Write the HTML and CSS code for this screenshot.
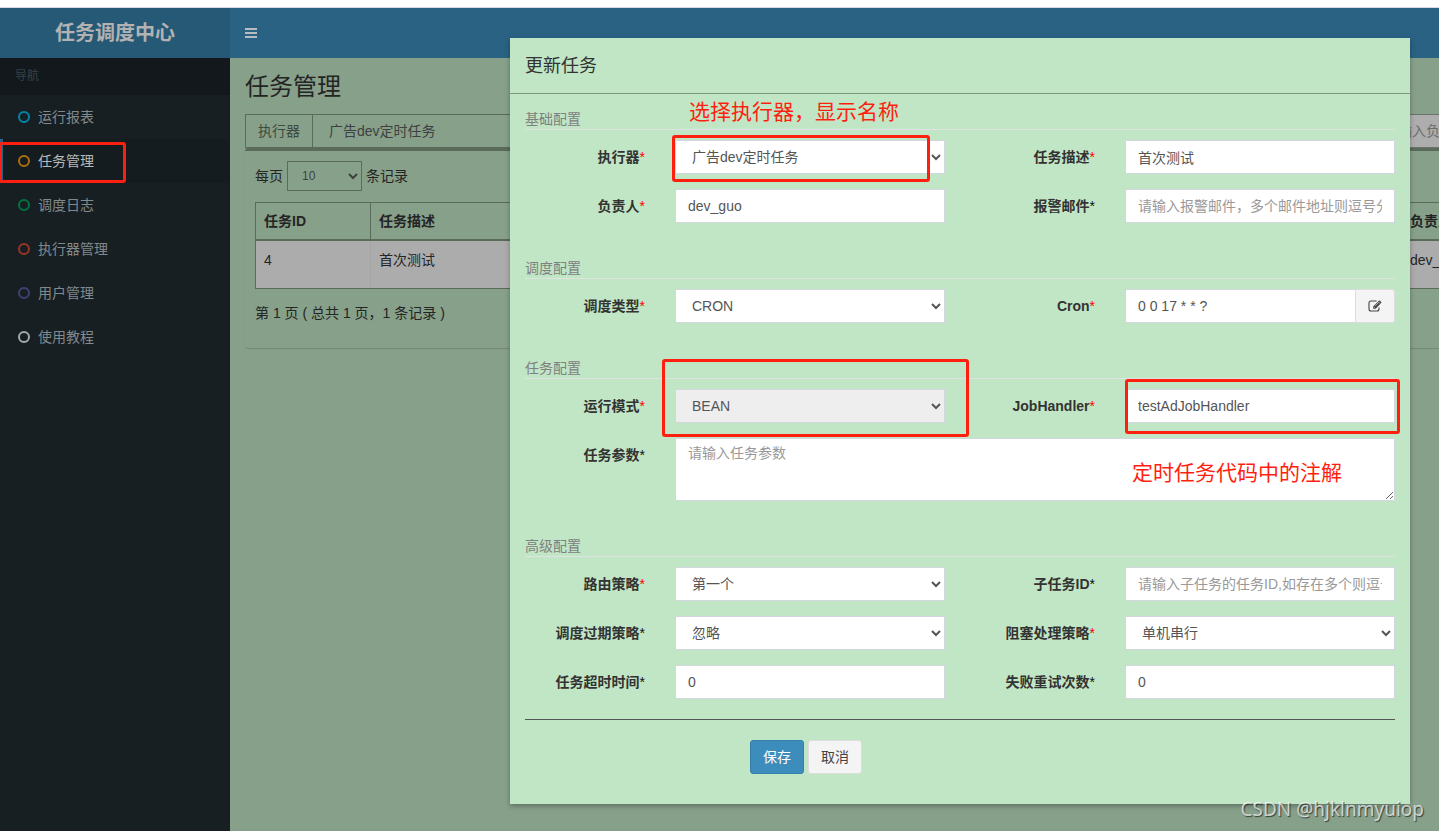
FILE: index.html
```html
<!DOCTYPE html>
<html lang="zh-CN">
<head>
<meta charset="utf-8">
<title>任务调度中心</title>
<link rel="stylesheet" href="styles.css">
</head>
<body>
<div class="page">
  <header class="topbar">
    <a class="logo" href="#">任务调度中心</a>
    <nav class="navbar">
      <button class="toggle" type="button" aria-label="菜单">
        <svg width="12" height="10" viewBox="0 0 12 10"><path d="M0 0h12v2H0zM0 4h12v2H0zM0 8h12v2H0z" fill="#b8bcbe"/></svg>
      </button>
    </nav>
  </header>
  <div class="columns">
    <aside class="sidebar">
      <div class="nav-title">导航</div>
      <a class="nav-item" href="#"><span class="ring aqua"></span>运行报表</a>
      <a class="nav-item active" href="#"><span class="ring yellow"></span>任务管理</a>
      <a class="nav-item" href="#"><span class="ring green"></span>调度日志</a>
      <a class="nav-item" href="#"><span class="ring red"></span>执行器管理</a>
      <a class="nav-item" href="#"><span class="ring purple"></span>用户管理</a>
      <a class="nav-item" href="#"><span class="ring white"></span>使用教程</a>
      <div class="mark mark-menu"></div>
    </aside>
    <main class="content">
      <h1>任务管理</h1>
      <div class="board">
        <div class="filters">
          <div class="group">
            <label class="addon" for="f-group">执行器</label>
            <select class="dim-select" id="f-group"><option>广告dev定时任务</option></select>
          </div>
          <input class="dim-input" type="text" placeholder="请输入负责人" aria-label="负责人">
        </div>
        <section class="box">
          <label class="length">每页 <select class="len-select"><option>10</option></select> 条记录</label>
          <table class="jobs">
            <colgroup><col class="col-id"><col class="col-desc"><col></colgroup>
            <thead><tr><th>任务ID</th><th>任务描述</th><th>负责人</th></tr></thead>
            <tbody><tr><td>4</td><td>首次测试</td><td>dev_guo</td></tr></tbody>
          </table>
          <div class="info">第 1 页 ( 总共 1 页，1 条记录 )</div>
        </section>
      </div>
    </main>
  </div>

  <div class="overlay">
    <div class="modal" role="dialog" aria-labelledby="modal-title">
      <h2 class="modal-head" id="modal-title">更新任务</h2>
      <form class="modal-body">
        <p class="legend">基础配置</p>
        <div class="row">
          <label for="jobGroup">执行器<span class="req">*</span></label>
          <div class="cell"><select class="control" id="jobGroup"><option>广告dev定时任务</option></select></div>
          <label for="jobDesc">任务描述<span class="req">*</span></label>
          <div class="cell"><input class="control" id="jobDesc" type="text" value="首次测试"></div>
        </div>
        <div class="row">
          <label for="author">负责人<span class="req">*</span></label>
          <div class="cell"><input class="control" id="author" type="text" value="dev_guo"></div>
          <label for="mail">报警邮件<span class="opt">*</span></label>
          <div class="cell"><input class="control" id="mail" type="text" placeholder="请输入报警邮件，多个邮件地址则逗号分隔"></div>
        </div>

        <p class="legend later">调度配置</p>
        <div class="row">
          <label for="schedule">调度类型<span class="req">*</span></label>
          <div class="cell"><select class="control" id="schedule"><option>CRON</option></select></div>
          <label for="cron">Cron<span class="req">*</span></label>
          <div class="cell cron">
            <input class="control" id="cron" type="text" value="0 0 17 * * ?">
            <button class="edit" type="button" aria-label="编辑">
              <svg width="14" height="12" viewBox="0 0 14 12" fill="none"><path d="M8.6 1H3Q1 1 1 3v6q0 2 2 2h6q2 0 2-2V7.6" stroke="#444" stroke-width="1.1"/><path d="M5.2 8.8V6.4L10.9.7q.5-.5 1 0l1.3 1.3q.5.5 0 1L7.6 8.8z" fill="#444"/><path d="M6.1 7l.9.9M7.2 5.9l3.5-3.5M10.4 1.9l1.8 1.8" stroke="#f4f4f4" stroke-width=".6"/></svg>
            </button>
          </div>
        </div>

        <p class="legend later">任务配置</p>
        <div class="row">
          <label for="glue">运行模式<span class="req">*</span></label>
          <div class="cell"><select class="control" id="glue" disabled><option>BEAN</option></select></div>
          <label for="handler">JobHandler<span class="req">*</span></label>
          <div class="cell"><input class="control" id="handler" type="text" value="testAdJobHandler"></div>
        </div>
        <div class="row">
          <label for="param">任务参数<span class="opt">*</span></label>
          <div class="cell wide"><textarea class="control area" id="param" placeholder="请输入任务参数"></textarea></div>
        </div>

        <p class="legend later">高级配置</p>
        <div class="row">
          <label for="route">路由策略<span class="req">*</span></label>
          <div class="cell"><select class="control" id="route"><option>第一个</option></select></div>
          <label for="child">子任务ID<span class="opt">*</span></label>
          <div class="cell"><input class="control" id="child" type="text" placeholder="请输入子任务的任务ID,如存在多个则逗号分隔"></div>
        </div>
        <div class="row">
          <label for="misfire">调度过期策略<span class="opt">*</span></label>
          <div class="cell"><select class="control" id="misfire"><option>忽略</option></select></div>
          <label for="block">阻塞处理策略<span class="req">*</span></label>
          <div class="cell"><select class="control" id="block"><option>单机串行</option></select></div>
        </div>
        <div class="row">
          <label for="timeout">任务超时时间<span class="opt">*</span></label>
          <div class="cell"><input class="control" id="timeout" type="text" value="0"></div>
          <label for="retry">失败重试次数<span class="opt">*</span></label>
          <div class="cell"><input class="control" id="retry" type="text" value="0"></div>
        </div>
        <hr>
        <div class="actions">
          <button class="btn primary" type="submit">保存</button>
          <button class="btn" type="button">取消</button>
        </div>
      </form>
      <div class="mark mark-group"></div>
      <div class="mark mark-mode"></div>
      <div class="mark mark-handler"></div>
      <div class="note note-group">选择执行器，显示名称</div>
      <div class="note note-handler">定时任务代码中的注解</div>
    </div>
  </div>
  <div class="watermark">CSDN @hjklnmyuiop</div>
</div>
</body>
</html>
```
FILE: styles.css
```css
* { box-sizing: border-box; }
body {
  margin: 0;
  font: 14px/20px "Liberation Sans", "Noto Sans CJK SC", sans-serif;
  color: #333;
  background: #fff;
}
input, select, textarea, button { font: inherit; margin: 0; }
a { text-decoration: none; }

.page {
  position: relative;
  min-height: 100vh;
  display: flex;
  flex-direction: column;
  overflow: hidden;
}
.topbar {
  display: flex;
  height: 50px;
  margin-top: 7px;
  border-top: 1px solid #d6dae4;
  box-sizing: content-box;
}
.logo {
  width: 230px;
  flex: none;
  background: #265976;
  color: #b2b2b2;
  font-size: 20px;
  font-weight: bold;
  line-height: 50px;
  text-align: center;
}
.navbar { flex: 1; background: #2a6284; display: flex; }
.toggle {
  border: 0;
  background: none;
  padding: 0 15px;
  display: flex;
  align-items: center;
}
.columns { flex: 1; display: flex; }

.sidebar { position: relative; width: 230px; flex: none; background: #181f23; }
.nav-title {
  padding: 8px 15px 9px;
  font-size: 12px;
  background: #12181b;
  color: #35454b;
}
.nav-item {
  display: flex;
  align-items: center;
  gap: 8px;
  height: 44px;
  padding-left: 15px;
  border-left: 3px solid transparent;
  color: #80898c;
}
.nav-item.active { background: #151c1f; border-left-color: #2a6284; color: #b8b8b8; }
.ring { width: 12px; height: 12px; border: 2px solid; border-radius: 50%; }
.aqua { color: #0086a8; }
.yellow { color: #aa6d0c; }
.green { color: #00743f; }
.red { color: #9b3427; }
.purple { color: #423f72; }
.white { color: #a5a9ac; }

.content {
  flex: 1;
  min-width: 0;
  overflow: hidden;
  background: #87a08a;
  padding: 15px;
  color: #242424;
}
h1 { margin: 0; font-size: 24px; line-height: 28px; font-weight: normal; }
.board { width: 1650px; margin-top: 13px; }
.filters { display: grid; grid-template-columns: 1111px 1fr; gap: 15px; }
.group { display: flex; }
.addon {
  padding: 6px 12px;
  border: 1px solid #5a6b5c;
  border-right: 0;
  color: #3e4a40;
}
.dim-select {
  flex: 1;
  height: 34px;
  padding: 6px 12px;
  border: 1px solid #5a6b5c;
  border-radius: 0;
  background: transparent;
  color: #3e4140;
}
.dim-input {
  height: 34px;
  padding: 6px 12px;
  border: 1px solid #6b736c;
  background: #adadad;
}
.dim-input::placeholder { color: #6c6c6c; }
.box {
  border-top: 3px solid #5a6b5c;
  border-radius: 3px;
  padding: 10px;
  height: 200px;
  box-shadow: 0 1px 1px rgba(0, 0, 0, .15);
}
.length { display: flex; align-items: center; gap: 4px; height: 30px; }
.len-select {
  width: 75px;
  height: 30px;
  padding: 5px 10px;
  border: 1px solid #5a6b5c;
  border-radius: 0;
  background: transparent;
  font-size: 12px;
  color: #3e4140;
}
.jobs {
  width: 100%;
  table-layout: fixed;
  border-collapse: separate;
  border-spacing: 0;
  margin-top: 11px;
  border: 1px solid #5a6b5c;
}
.col-id { width: 115px; }
.col-desc { width: 1031px; }
th { padding: 8px; text-align: left; border-right: 1px solid #5a6b5c; border-bottom: 2px solid #5a6b5c; }
td { height: 47px; padding: 9px 8px; vertical-align: top; background: #adacad; border-right: 1px solid #a5a5a6; }
.info { margin-top: 14px; }

.overlay {
  position: absolute;
  top: 38px;
  left: 0;
  right: 0;
  padding-right: 29px;
  display: flex;
  justify-content: flex-end;
}
.modal {
  position: relative;
  width: 900px;
  background: #c1e6c5;
  box-shadow: 0 2px 5px rgba(0, 0, 0, .3);
}
.modal-head {
  margin: 0;
  padding: 16px 15px 14px;
  font-size: 18px;
  line-height: 25px;
  font-weight: normal;
  border-bottom: 1px solid #7d9680;
}
.modal-body { padding: 15px; }
.legend { margin: 0 0 10px; color: #808080; border-bottom: 1px solid #dfe3e2; }
.later { margin-top: 35px; }
.row {
  display: grid;
  grid-template-columns: 2fr 4fr 2fr 4fr;
  margin: 0 -15px 15px;
}
.row label { padding: 7px 15px 0; text-align: right; font-weight: bold; }
.req { color: #f00; font-weight: normal; }
.opt { color: #111; font-weight: normal; }
.cell { padding: 0 15px; min-width: 0; display: flex; }
.wide { grid-column: span 3; }
.control {
  flex: 1;
  min-width: 0;
  width: 100%;
  height: 34px;
  padding: 6px 12px;
  border: 1px solid #d2d6de;
  border-radius: 0;
  background: #fff;
  color: #555;
}
.control:disabled { background: #eee; opacity: 1; }
.control::placeholder { color: #999; }
.area { height: 63px; padding-top: 4px; resize: vertical; }
.edit {
  width: 40px;
  margin-left: -1px;
  padding: 0;
  display: flex;
  align-items: center;
  justify-content: center;
  border: 1px solid #ddd;
  border-radius: 0 3px 3px 0;
  background: #f4f4f4;
}
hr { margin: 20px 0; border: 0; border-top: 1px solid #555; }
.actions { display: flex; gap: 4px; padding-left: 225px; margin-bottom: 15px; }
.btn {
  height: 34px;
  padding: 6px 12px;
  border: 1px solid #ddd;
  border-radius: 3px;
  background: #f4f4f4;
  color: #444;
}
.primary { background: #3c8dbc; border-color: #367fa9; color: #fff; }

.mark { position: absolute; border: 3px solid #ff1f10; border-radius: 3px; }
.mark-menu { left: -1px; top: 84px; width: 127px; height: 41px; }
.mark-group { left: 162px; top: 97px; width: 258px; height: 47px; }
.mark-mode { left: 152px; top: 321px; width: 307px; height: 78px; }
.mark-handler { left: 615px; top: 341px; width: 275px; height: 55px; }
.note { position: absolute; font-size: 21px; line-height: 30px; color: #ff1f10; white-space: nowrap; }
.note-group { left: 179px; top: 59px; }
.note-handler { left: 622px; top: 420px; }
.watermark {
  position: absolute;
  right: 15px;
  bottom: 8px;
  font: 19px/28px "Noto Sans", sans-serif;
  color: rgba(255, 255, 255, .7);
  text-shadow: 1px 1px 1px rgba(0, 0, 0, .6);
}
```
